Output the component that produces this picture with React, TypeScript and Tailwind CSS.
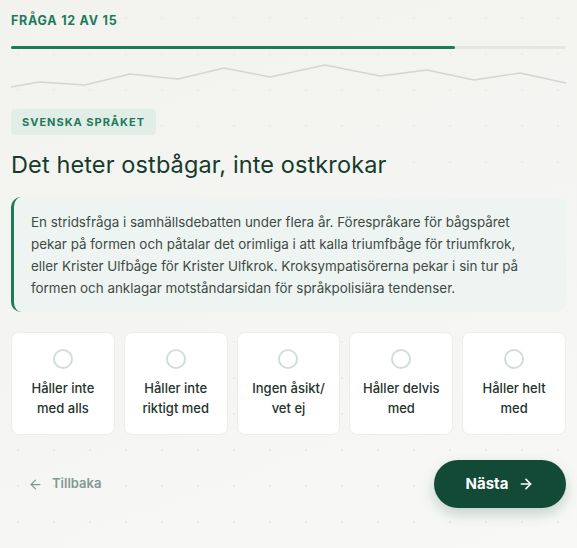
import { ArrowLeft, ArrowRight } from 'lucide-react';

const options = [
  ['Håller inte', 'med alls'],
  ['Håller inte', 'riktigt med'],
  ['Ingen åsikt/', 'vet ej'],
  ['Håller delvis', 'med'],
  ['Håller helt', 'med'],
];

const wave = '0,23 28,18 74,21 119,10 167,15 213,4 259,13 314,1 369,12 416,6 463,16 509,9 555,19';

export default function App() {
  return (
    <div className="min-h-[548px] w-full bg-[#f3f3f0] bg-[linear-gradient(160deg,#f2f2ef_0%,#f5f6f3_60%,#f8f9f6_100%)] font-['Inter',sans-serif] text-[#163a2c]">
      <div className="bg-[radial-gradient(circle,#ebece8_1px,transparent_1.2px)] bg-[length:36px_36px] px-[11px] pt-[13px] pb-[39px]">
        <div className="text-[12.5px] font-bold tracking-[0.06em] text-[#1f7a5a] leading-[16px]">FRÅGA 12 AV 15</div>

        <div className="mt-[17px] h-[3px] w-full rounded-full bg-[#e3e6e2]">
          <div className="h-full w-[80%] rounded-full bg-[#1f7a5a]" />
        </div>

        <svg className="mt-[15px] block" width="555" height="26" viewBox="0 0 555 26" fill="none">
          <polyline points={wave} stroke="#d0d7d2" strokeWidth="1.3" strokeLinejoin="round" />
        </svg>

        <div className="mt-[19px] inline-flex h-[26px] items-center rounded-[4px] bg-[#e1eee8] px-[11px] text-[11px] font-bold tracking-[0.09em] text-[#1f7a5a]">
          SVENSKA SPRÅKET
        </div>

        <h1 className="mt-[15px] text-[23.5px] font-normal leading-[30px] tracking-[0.005em] text-[#163a2c]">Det heter ostbågar, inte ostkrokar</h1>

        <div className="mt-[17px] rounded-[10px] border-l-[3px] border-[#1f7a5a] bg-[#eef4f1] pt-[14px] pb-[13px] pl-[17px] pr-[28px] text-[13.4px] leading-[22px] text-[#3e4b45]">
          En stridsfråga i samhällsdebatten under flera år. Förespråkare för bågspåret pekar på formen och påtalar det orimliga i att kalla triumfbåge för triumfkrok, eller Krister Ulfbåge för Krister Ulfkrok. Kroksympatisörerna pekar i sin tur på formen och anklagar motståndarsidan för språkpolisiära tendenser.
        </div>

        <div className="mt-[20px] grid grid-cols-5 gap-[9px]">
          {options.map(([a, b]) => (
            <div key={a + b} className="flex h-[103px] flex-col items-center rounded-[8px] border border-[#eceeeb] bg-white pt-[16px]">
              <div className="h-[20px] w-[20px] rounded-full border-2 border-[#d2ddd8]" />
              <div className="mt-[9px] text-center text-[13px] font-medium leading-[20px] text-[#24332c]">
                {a}
                <br />
                {b}
              </div>
            </div>
          ))}
        </div>

        <div className="mt-[25px] flex items-center justify-between">
          <button className="flex items-center gap-[9px] pl-[17px] text-[13px] font-semibold text-[#82998f]">
            <ArrowLeft size={15} strokeWidth={2} />
            Tillbaka
          </button>
          <button className="flex h-[48px] w-[132px] items-center justify-center gap-[10px] rounded-full bg-[#124a37] text-[15px] font-bold text-white shadow-[0_6px_14px_rgba(18,74,55,0.22)]">
            Nästa
            <ArrowRight size={16} strokeWidth={2.4} />
          </button>
        </div>
      </div>
    </div>
  );
}
